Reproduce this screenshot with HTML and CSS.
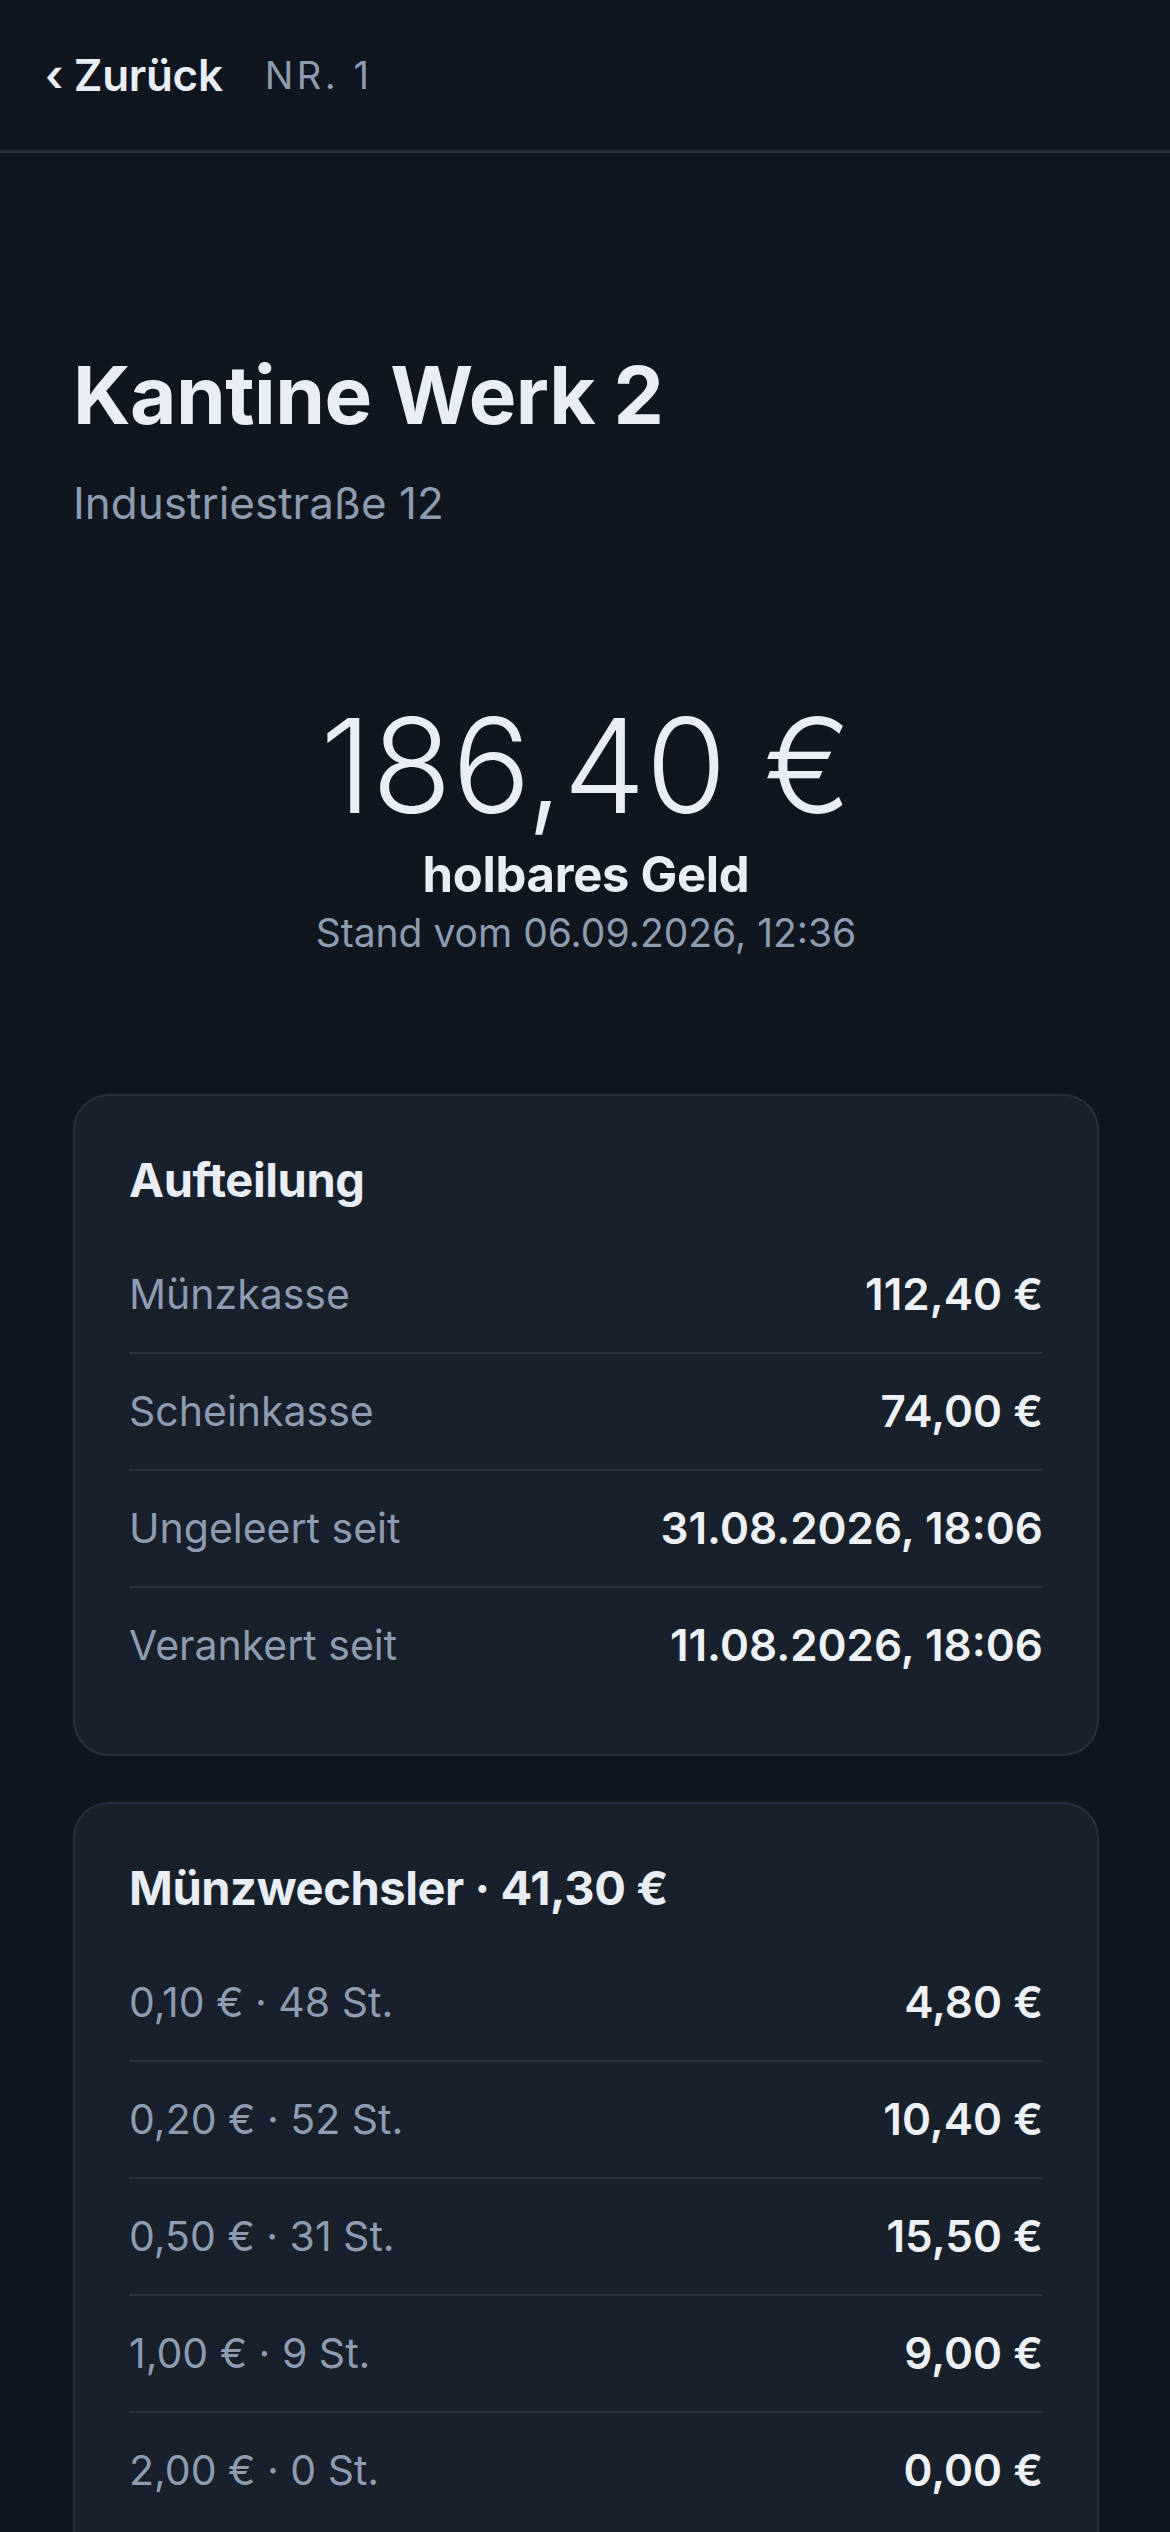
FILE: index.html
```html
<!doctype html>
<html lang="de">
<head>
    <meta charset="UTF-8">
    <title>Kantine Werk 2</title>
    <link rel="stylesheet" href="styles.css">
</head>
<body>
<div class="topbar">
    <span class="back">&lsaquo; Zurück</span>
    <span class="nr">NR. 1</span>
</div>
<div class="main">
    <h1 class="title">Kantine Werk 2</h1>
    <div class="address">Industriestraße 12</div>

    <div class="total">
        <div class="amount">186,40 €</div>
        <div class="amount-label">holbares Geld</div>
        <div class="amount-date">Stand vom 06.09.2026, 12:36</div>
    </div>

    <div class="card">
        <div class="card-title">Aufteilung</div>
        <div class="row"><span class="key">Münzkasse</span><span class="val">112,40 €</span></div>
        <div class="row"><span class="key">Scheinkasse</span><span class="val">74,00 €</span></div>
        <div class="row"><span class="key">Ungeleert seit</span><span class="val">31.08.2026, 18:06</span></div>
        <div class="row"><span class="key">Verankert seit</span><span class="val">11.08.2026, 18:06</span></div>
    </div>

    <div class="card">
        <div class="card-title">Münzwechsler · 41,30 €</div>
        <div class="row"><span class="key">0,10 € · 48 St.</span><span class="val">4,80 €</span></div>
        <div class="row"><span class="key">0,20 € · 52 St.</span><span class="val">10,40 €</span></div>
        <div class="row"><span class="key">0,50 € · 31 St.</span><span class="val">15,50 €</span></div>
        <div class="row"><span class="key">1,00 € · 9 St.</span><span class="val">9,00 €</span></div>
        <div class="row"><span class="key">2,00 € · 0 St.</span><span class="val">0,00 €</span></div>
    </div>
</div>
</body>
</html>
```

FILE: styles.css
```css
html,body{
    margin:0px;
    padding:0px;
    background:#0f1620;
    color:#e9eef6;
    font-family:Inter, "Noto Sans", sans-serif;
}
.topbar{
    height:150px;
    border-bottom:3px solid #243040;
    display:flex;
    align-items:center;
    padding:0 45px;
    gap:42px;
}
.back{
    font-size:44px;
    font-weight:600;
    letter-spacing:-0.3px;
    color:#e9eef6;
}
.nr{
    font-size:38px;
    letter-spacing:3.5px;
    color:#8d9cb0;
}
.main{
    padding:194px 71px 0 73px;
}
.title{
    margin:0;
    font-size:80px;
    line-height:96px;
    font-weight:700;
    letter-spacing:-0.5px;
}
.address{
    margin-top:33px;
    font-size:44px;
    line-height:54px;
    color:#8d9cb0;
}
.total{
    margin-top:161px;
    text-align:center;
}
.amount{
    font-size:131px;
    line-height:150px;
    font-weight:300;
}
.amount-label{
    margin-top:4px;
    font-size:49px;
    line-height:60px;
    font-weight:700;
    letter-spacing:-0.3px;
}
.amount-date{
    margin-top:4px;
    font-size:39px;
    line-height:48px;
    color:#8d9cb0;
}
.card{
    margin-top:137px;
    background:#18202c;
    border:2px solid #253140;
    border-radius:36px;
    padding:55px 54px 51px 54px;
}
.card + .card{
    margin-top:46px;
}
.card-title{
    font-size:47px;
    line-height:58px;
    font-weight:700;
    letter-spacing:-0.4px;
    margin-bottom:28px;
}
.row{
    display:flex;
    justify-content:space-between;
    align-items:center;
    padding:31px 0;
    line-height:53px;
    border-bottom:2px solid #27323f;
}
.row:last-child{
    border-bottom:none;
}
.key{
    font-size:41px;
    color:#8d9cb0;
}
.val{
    font-size:44px;
    font-weight:600;
    color:#eef2f7;
}
```
